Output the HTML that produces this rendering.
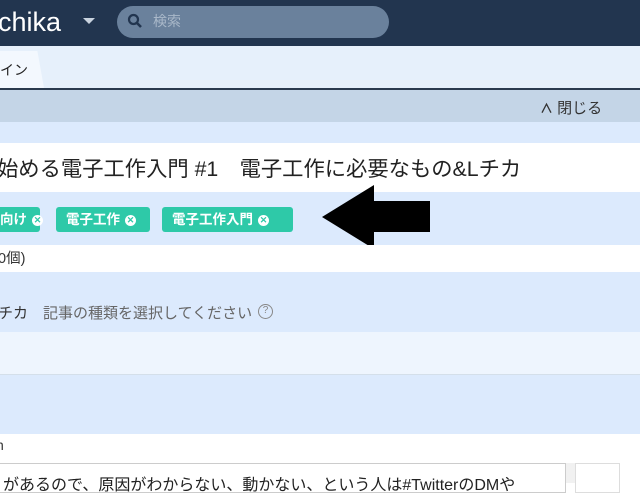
<!DOCTYPE html>
<html><head><meta charset="utf-8"><style>
*{margin:0;padding:0;box-sizing:border-box}
body{width:640px;height:480px;overflow:hidden;position:relative;font-family:"Liberation Sans","Noto Sans CJK JP",sans-serif;background:#fff}
.a{position:absolute}
.tag{position:absolute;top:207px;height:25px;background:#2ec9a8;border-radius:3px;color:#fff;font-size:13.5px;font-weight:bold;line-height:25px;padding-left:10px;white-space:nowrap}
.x{display:inline-block;width:11px;height:11px;border-radius:50%;background:#fff;color:#2ec9a8;font-size:9px;line-height:11px;text-align:center;margin-left:5px;vertical-align:1px}
</style></head><body>
<div class="a" style="left:0;top:0;width:640px;height:46px;background:#22354f"></div>
<div class="a" style="left:-2px;top:4px;color:#fff;font-size:27px;line-height:36px">chika</div>
<div class="a" style="left:83px;top:18px;width:0;height:0;border-left:6px solid transparent;border-right:6px solid transparent;border-top:6px solid #c9d3df"></div>
<div class="a" style="left:117px;top:6px;width:272px;height:32px;background:#6a819c;border-radius:16px"></div>
<svg class="a" style="left:127px;top:13px" width="16" height="16" viewBox="0 0 16 16"><circle cx="6.5" cy="6.5" r="4.5" fill="none" stroke="#22354f" stroke-width="2.2"/><line x1="10" y1="10" x2="14" y2="14" stroke="#22354f" stroke-width="2.6"/></svg>
<div class="a" style="left:153px;top:10px;color:#a9b8c9;font-size:14px;line-height:22px">検索</div>
<div class="a" style="left:0;top:46px;width:640px;height:42px;background:#e6f0fb"></div>
<div class="a" style="left:0;top:51px;width:44px;height:37px;background:#f3f8fe;clip-path:polygon(0 0,85% 0,100% 100%,0 100%)"></div>
<div class="a" style="left:0;top:60px;font-size:14px;color:#222">イン</div>
<div class="a" style="left:0;top:88px;width:640px;height:2px;background:#2a3a4e"></div>
<div class="a" style="left:0;top:90px;width:640px;height:32px;background:#c4d5e7"></div>
<div class="a" style="left:540px;top:97px;font-size:15px;color:#333"><b style="font-size:13px">∧</b> 閉じる</div>
<div class="a" style="left:0;top:122px;width:640px;height:21px;background:#dceafd"></div>
<div class="a" style="left:0;top:143px;width:640px;height:49px;background:#fff"></div>
<div class="a" style="left:-3px;top:152px;font-size:21.3px;color:#222;white-space:nowrap">始める電子工作入門 #1　電子工作に必要なもの&amp;Lチカ</div>
<div class="a" style="left:0;top:192px;width:640px;height:53px;background:#dceafd"></div>
<div class="tag" style="left:-10px;width:50px">向け<span class="x">✕</span></div>
<div class="tag" style="left:56px;width:94px">電子工作<span class="x">✕</span></div>
<div class="tag" style="left:162px;width:131px">電子工作入門<span class="x">✕</span></div>
<svg class="a" style="left:320px;top:184px" width="112" height="66"><polygon points="2,33 54,1 54,17 110,17 110,48 54,48 54,65" fill="#000"/></svg>
<div class="a" style="left:0;top:245px;width:640px;height:27px;background:#fff"></div>
<div class="a" style="left:-2px;top:247px;font-size:14.5px;color:#333">0個)</div>
<div class="a" style="left:0;top:272px;width:640px;height:60px;background:#dceafd"></div>
<div class="a" style="left:-2px;top:302px;font-size:15px;color:#333;white-space:nowrap">チカ　<span style="color:#666">記事の種類を選択してください</span></div>
<div class="a" style="left:258px;top:304px;width:15px;height:15px;border:1.5px solid #888;border-radius:50%;color:#888;font-size:10px;line-height:12px;text-align:center">?</div>
<div class="a" style="left:0;top:332px;width:640px;height:43px;background:#eef5fe;border-bottom:1px solid #d4dfea"></div>
<div class="a" style="left:0;top:375px;width:640px;height:59px;background:#dceafd"></div>
<div class="a" style="left:0;top:434px;width:640px;height:46px;background:#fff"></div>
<div class="a" style="left:-4px;top:437px;font-size:14px;color:#333">n</div>
<div class="a" style="left:-2px;top:463px;width:568px;height:30px;border:1px solid #ccc;background:#fff;overflow:hidden"><div style="padding:7px 0 0 4px;font-size:16px;color:#222;white-space:nowrap">があるので、原因がわからない、動かない、という人は#TwitterのDMや</div></div>
<div class="a" style="left:566px;top:463px;width:9px;height:20px;background:#f1f1f1"></div>
<div class="a" style="left:575px;top:463px;width:45px;height:30px;border:1px solid #ddd;background:#fff"></div>
</body></html>
